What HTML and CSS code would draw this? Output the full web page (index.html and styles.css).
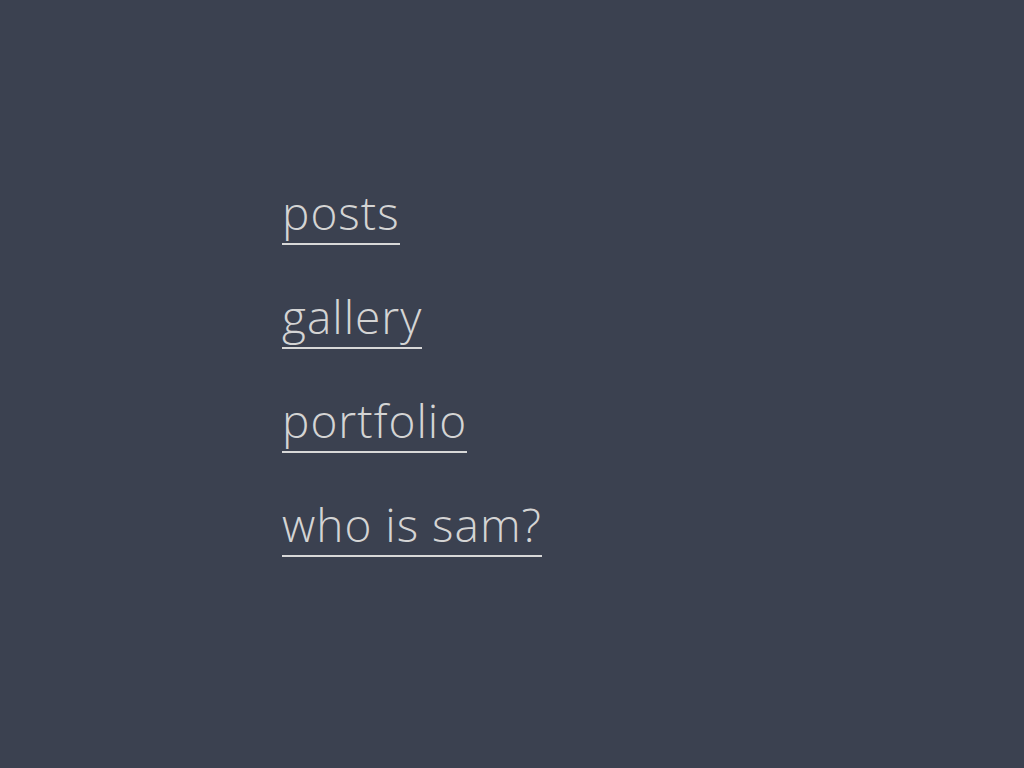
FILE: index.html
```html
<!DOCTYPE html>
<html>
<head>
<meta charset="utf-8">
<link rel="stylesheet" href="styles.css">
</head>
<body>
<main class="page">
  <nav class="menu">
    <a class="menu-link" href="#">posts</a>
    <a class="menu-link" href="#">gallery</a>
    <a class="menu-link" href="#">portfolio</a>
    <a class="menu-link" href="#">who is sam?</a>
  </nav>
</main>
</body>
</html>
```

FILE: styles.css
```css
html, body {
  margin: 0;
  padding: 0;
  background: #3b4150;
}
.page {
  min-height: 768px;
  box-sizing: border-box;
  padding: 181px 0 0 282px;
}
.menu {
  display: flex;
  flex-direction: column;
  align-items: flex-start;
  gap: 40px;
}
.menu-link {
  font-family: "Open Sans", sans-serif;
  font-weight: 300;
  font-size: 46px;
  letter-spacing: 1px;
  line-height: 62px;
  color: #d4d4d4;
  text-decoration: none;
  border-bottom: 2px solid #d8d8d8;
}
```
